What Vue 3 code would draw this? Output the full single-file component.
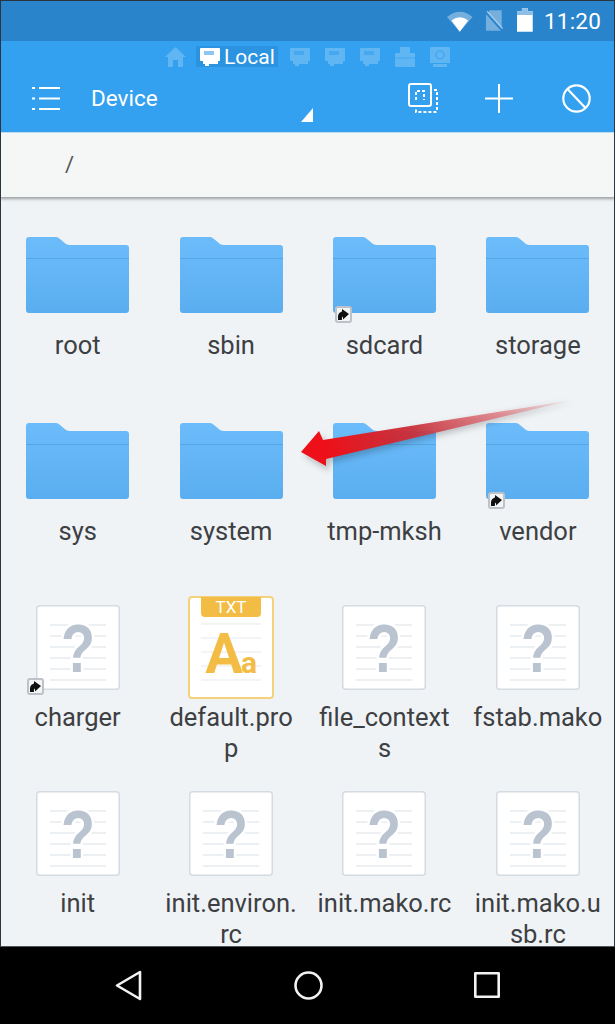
<script setup>
const items = [
  { name: 'root', type: 'folder' },
  { name: 'sbin', type: 'folder' },
  { name: 'sdcard', type: 'folder', link: true },
  { name: 'storage', type: 'folder' },
  { name: 'sys', type: 'folder' },
  { name: 'system', type: 'folder' },
  { name: 'tmp-mksh', type: 'folder' },
  { name: 'vendor', type: 'folder', link: true },
  { name: 'charger', type: 'file', link: true },
  { name: 'default.prop', type: 'txt' },
  { name: 'file_contexts', type: 'file' },
  { name: 'fstab.mako', type: 'file' },
  { name: 'init', type: 'file' },
  { name: 'init.environ.rc', type: 'file' },
  { name: 'init.mako.rc', type: 'file' },
  { name: 'init.mako.usb.rc', type: 'file' },
]
const fileLines = [20, 31, 42, 53, 64, 75]
const txtLines = [28, 42, 56, 70, 84]
const sd = 'M1 0 H19 Q20 0 20 1 V13 H18 V16 H9 V18 H5 V16 H3 V13 H1 Q0 13 0 12 V1 Q0 0 1 0 Z'
</script>

<template>
  <div class="screen">
    <header class="status">
      <svg class="st-wifi" width="26" height="22" viewBox="0 0 26 22">
        <path d="M0 7 Q13 -4 26 7 L13 22 Z" fill="#fff" fill-opacity=".35" />
        <path d="M4.500 10.500 Q13 4 21.500 10.500 L13 22 Z" fill="#fff" />
      </svg>
      <svg class="st-sim" width="20" height="23" viewBox="0 0 20 23">
        <path d="M6 1 H18 V22 H2 V6 Z" fill="#fff" fill-opacity=".35" />
        <path d="M1 2 L19 22" stroke="#2a84cc" stroke-width="2.500" />
        <path d="M3 2 L19 20" stroke="#fff" stroke-opacity=".45" stroke-width="1.500" />
      </svg>
      <svg class="st-bat" width="16" height="24" viewBox="0 0 16 24">
        <path d="M5 0 H11 V3 H16 V24 H0 V3 H5 Z" fill="#fff" />
        <path d="M5 0 H11 V3 H16 V7 H0 V3 H5 Z" fill="#8dbfe6" />
      </svg>
      <span class="time">11:20</span>
    </header>

    <section class="appbar">
      <div class="tabs">
        <svg class="tab-ico home" width="21" height="20" viewBox="0 0 21 20">
          <path d="M10.500 0 L21 10 H18 V20 H13 V13 H8 V20 H3 V10 H0 Z" fill="#fff" />
        </svg>
        <div class="tab-active">
          <svg width="20" height="18" viewBox="0 0 20 18">
            <path :d="sd" fill="#fff" />
            <rect x="4" y="3" width="10" height="4" fill="#8cc6f2" />
          </svg>
          <span>Local</span>
        </div>
        <svg v-for="n in 3" :key="n" class="tab-ico" width="20" height="18" viewBox="0 0 20 18">
          <path :d="sd" fill="#fff" />
          <rect x="4" y="3" width="10" height="4" fill="#33a0f0" fill-opacity=".6" />
        </svg>
        <svg class="tab-ico" width="20" height="20" viewBox="0 0 20 20">
          <path d="M5 0 H15 V6 H20 V20 H0 V6 H5 Z" fill="#fff" />
          <path d="M0 11 H20" stroke="#33a0f0" stroke-opacity=".6" stroke-width="1" />
        </svg>
        <svg class="tab-ico" width="20" height="20" viewBox="0 0 20 20">
          <path d="M1 0 H19 Q20 0 20 1 V16 H0 V1 Q0 0 1 0 Z M3 17 H17 V20 H3 Z" fill="#fff" />
          <circle cx="10" cy="8" r="4" fill="none" stroke="#33a0f0" stroke-opacity=".6" stroke-width="1.500" />
        </svg>
      </div>
      <div class="toolbar">
        <svg class="menu" width="28" height="23" viewBox="0 0 28 23">
          <g stroke="#fff" stroke-width="2">
            <path d="M0 1 H3 M7 1 H28" /><path d="M0 11.500 H3 M7 11.500 H28" /><path d="M0 22 H3 M7 22 H28" />
          </g>
        </svg>
        <span class="title">Device</span>
        <svg class="act-copy" width="30" height="30" viewBox="0 0 30 30" fill="none" stroke="#fff" stroke-width="2">
          <rect x="1" y="1" width="22" height="22" rx="2" />
          <path d="M8 17 V8 H16 V17" stroke-dasharray="3 2" />
          <path d="M26 7 H29 V28 Q29 29 28 29 H8 V25" stroke-dasharray="3 2" />
        </svg>
        <svg class="act-plus" width="28" height="29" viewBox="0 0 28 29" stroke="#fff" stroke-width="2">
          <path d="M14 0 V29 M0 14.500 H28" />
        </svg>
        <svg class="act-ban" width="29" height="29" viewBox="0 0 29 29" fill="none" stroke="#fff" stroke-width="2.200">
          <circle cx="14.500" cy="14.500" r="13.200" />
          <path d="M5.500 5 L23.500 24" />
        </svg>
      </div>
      <span class="corner"></span>
    </section>

    <div class="pathbar"><span>/</span></div>

    <main class="grid">
      <div v-for="item in items" :key="item.name" class="cell">
        <div class="icon">
          <svg v-if="item.type === 'folder'" width="103" height="76" viewBox="0 0 103 76">
            <defs>
              <linearGradient id="fold" x1="0" y1="0" x2="0" y2="1">
                <stop offset="0" stop-color="#6cbcfb" />
                <stop offset="1" stop-color="#5aaeef" />
              </linearGradient>
            </defs>
            <path d="M3 0 H30 Q32 0 34 2 L40 7 Q42 8 44 8 H100 Q103 8 103 11 V73 Q103 76 100 76 H3 Q0 76 0 73 V3 Q0 0 3 0 Z" fill="url(#fold)" />
            <rect y="21" width="103" height="1" fill="#55a6e6" />
          </svg>
          <svg v-else-if="item.type === 'file'" width="84" height="85" viewBox="0 0 84 85">
            <rect x=".75" y=".75" width="82.500" height="83.500" rx="3" fill="#fff" stroke="#d5dbe2" stroke-width="1.500" />
            <path v-for="y in fileLines" :key="y" :d="`M14 ${y} H70`" stroke="#e7ebef" stroke-width="1.300" />
            <text transform="translate(42 67) scale(.82 1)" text-anchor="middle" class="qmark">?</text>
          </svg>
          <svg v-else width="86" height="103" viewBox="0 0 86 103">
            <rect x="1" y="1" width="84" height="101" rx="3" fill="#fff" stroke="#f4d27c" stroke-width="2" />
            <path d="M13 1 H73 V17 Q73 21 69 21 H17 Q13 21 13 17 Z" fill="#f3bd45" />
            <text x="43" y="17" text-anchor="middle" class="txt-tag">TXT</text>
            <path v-for="y in txtLines" :key="y" :d="`M13 ${y} H73`" stroke="#eef0f2" stroke-width="1.300" />
            <text x="36" y="77" text-anchor="middle" class="big-a">A</text>
            <text x="61" y="77" text-anchor="middle" class="small-a">a</text>
          </svg>
          <span v-if="item.link" class="badge" :class="'badge-' + item.type">
            <svg width="11" height="11" viewBox="0 0 11 11">
              <path d="M0 11 Q-1 4 4 2.500 V0 L11 5 L5 10.500 V7.500 Q3.500 8 4 11 Z" fill="#111" />
            </svg>
          </span>
        </div>
        <div class="label">{{ item.name }}</div>
      </div>
    </main>

    <nav class="navbar">
      <svg width="27" height="31" viewBox="0 0 27 31" fill="none" stroke="#f2f2f2" stroke-width="2.600" stroke-linejoin="round">
        <path d="M25 2 V29 L2 15.500 Z" />
      </svg>
      <svg width="29" height="29" viewBox="0 0 29 29" fill="none" stroke="#f2f2f2" stroke-width="2.600">
        <circle cx="14.500" cy="14.500" r="13" />
      </svg>
      <svg class="nav-sq" width="26" height="26" viewBox="0 0 26 26" fill="none" stroke="#f2f2f2" stroke-width="2.600" stroke-linejoin="round">
        <rect x="1.300" y="1.300" width="23.400" height="23.400" />
      </svg>
    </nav>

    <svg class="arrow" width="615" height="1024" viewBox="0 0 615 1024">
      <defs>
        <linearGradient id="shaft" gradientUnits="userSpaceOnUse" x1="326" y1="450" x2="573" y2="400">
          <stop offset="0" stop-color="#ee1018" />
          <stop offset=".35" stop-color="#c8303a" stop-opacity=".95" />
          <stop offset=".7" stop-color="#e06870" stop-opacity=".7" />
          <stop offset="1" stop-color="#e57f85" stop-opacity=".05" />
        </linearGradient>
        <filter id="soft" x="-10%" y="-30%" width="120%" height="170%">
          <feGaussianBlur stdDeviation="3" />
        </filter>
      </defs>
      <path d="M304 456 L322 435 L326 444 L573 402 L329 463 L329 471 Z" fill="#000" fill-opacity=".22" filter="url(#soft)" />
      <path d="M301 452 L319 431 L323 440 L573 400 L326 459 L326 466 Z" fill="url(#shaft)" />
    </svg>
    <div class="edge"></div>
  </div>
</template>

<style scoped>
.screen {
  position: relative;
  width: 615px;
  height: 1024px;
  box-sizing: border-box;
  display: flex;
  flex-direction: column;
  overflow: hidden;
  font-family: Roboto, "Liberation Sans", sans-serif;
  background: #000;
}
.edge {
  position: absolute;
  left: 0;
  top: 0;
  width: 615px;
  height: 947px;
  box-sizing: border-box;
  border: 1px solid #2b3540;
  border-bottom-color: #555;
  pointer-events: none;
  z-index: 3;
}
.status {
  height: 41px;
  flex: none;
  background: #2a84cc;
  display: flex;
  align-items: center;
  color: #fff;
  padding: 0 14px 0 447px;
  box-sizing: border-box;
}
.st-sim { margin-left: 11px; }
.st-bat { margin-left: 14px; margin-top: -2px; }
.time { margin-left: 11px; font-size: 22.500px; letter-spacing: .2px; }
.appbar {
  position: relative;
  flex: none;
  height: 91px;
  background: #33a0f0;
  color: #fff;
  box-sizing: border-box;
  padding-top: 5px;
}
.tabs {
  display: flex;
  align-items: center;
  height: 21px;
  padding-left: 165px;
}
.tab-ico { opacity: .22; margin-left: 15px; flex: none; }
.tab-ico.home { margin-left: 0; margin-right: 10px; }
.tab-active {
  display: flex;
  align-items: center;
  gap: 4px;
  height: 21px;
  width: 82px;
  padding-left: 4px;
  box-sizing: border-box;
  background: #2c93e0;
  font-size: 21px;
  margin-right: -3px;
}
.toolbar {
  display: flex;
  align-items: center;
  height: 30px;
  margin-top: 16px;
  padding-left: 32px;
}
.title { font-size: 22.500px; margin-left: 31px; width: 317px; flex: none; }
.act-plus { margin-left: 47px; }
.act-ban { margin-left: 49px; }
.corner {
  position: absolute;
  left: 301px;
  top: 67px;
  border-style: solid;
  border-width: 0 0 14px 12px;
  border-color: transparent transparent #fff transparent;
}
.pathbar {
  flex: none;
  height: 65px;
  box-sizing: border-box;
  background: #f5f6f6;
  padding: 19px 0 0 65px;
  font-size: 22px;
  color: #555;
  box-shadow: 0 2px 3px #9a9e9e;
  position: relative;
  z-index: 1;
  border-top: 1px solid #b9dcf7;
}
.grid {
  flex: 1;
  min-height: 0;
  overflow: hidden;
  background: #f0f3f6;
  display: grid;
  grid-template-columns: repeat(4, 153.400px);
  grid-auto-rows: 186px;
  padding: 23px 0 0 1.500px;
}
.cell {
  display: flex;
  flex-direction: column;
  align-items: center;
  margin-left: -1px;
}
.icon {
  position: relative;
  width: 103px;
  height: 110px;
  display: flex;
  align-items: center;
  justify-content: center;
}
.icon svg { display: block; }
.label {
  width: 135px;
  font-size: 25.500px;
  line-height: 31px;
  text-align: center;
  color: #3d4043;
  word-break: break-all;
}
.badge {
  position: absolute;
  width: 17px;
  height: 17px;
  box-sizing: border-box;
  background: #f4f5f6;
  border: 2px solid #bcc2c8;
  border-radius: 3px;
  display: flex;
  align-items: center;
  justify-content: center;
}
.badge svg { width: 11px; height: 11px; }
.badge-folder { left: 2px; top: 86px; }
.badge-file { left: 1px; top: 86px; }
.qmark {
  font-family: "Liberation Sans", sans-serif;
  font-weight: 700;
  font-size: 68px;
  fill: #bac4d0;
  stroke: #fff;
  stroke-width: 6px;
  paint-order: stroke;
}
.txt-tag { font-family: Roboto, sans-serif; font-size: 17px; fill: #fff; }
.big-a { font-family: Roboto, sans-serif; font-weight: 700; font-size: 56px; fill: #f3bd45; }
.small-a { font-family: Roboto, sans-serif; font-weight: 700; font-size: 30px; fill: #f3bd45; }
.navbar {
  flex: none;
  height: 77px;
  background: #000;
  display: flex;
  align-items: center;
  padding-left: 115px;
  gap: 152px;
}
.navbar svg { flex: none; margin-top: -1px; }
.navbar .nav-sq { margin-left: -1px; }
.arrow {
  position: absolute;
  left: 0;
  top: 0;
  pointer-events: none;
  z-index: 2;
}
</style>
